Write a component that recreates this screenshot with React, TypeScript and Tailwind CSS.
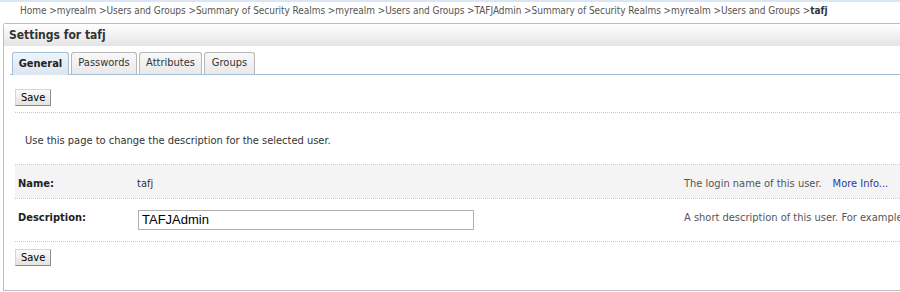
import React from "react";

const crumbs = [
  "Home",
  "myrealm",
  "Users and Groups",
  "Summary of Security Realms",
  "myrealm",
  "Users and Groups",
  "TAFJAdmin",
  "Summary of Security Realms",
  "myrealm",
  "Users and Groups",
];

function SaveButton() {
  return (
    <button className="h-[17px] px-[5px] text-[11px] leading-[15px] text-black border border-t-[#d6d6d6] border-l-[#d6d6d6] border-r-[#8c8c8c] border-b-[#8c8c8c] bg-gradient-to-b from-[#fbfbfb] to-[#e2e2de]">
      Save
    </button>
  );
}

const Dotted = () => <div className="h-0 border-t border-dotted border-[#c8c8c8]" />;

export default function App() {
  return (
    <div
      className="w-[900px] h-[292px] bg-white overflow-hidden text-[#333]"
      style={{ fontFamily: '"DejaVu Sans Condensed", "DejaVu Sans", sans-serif' }}
    >
      <div className="h-[2px] bg-[#dbe6f5]" />
      <div className="h-[21px] pl-[20px] pt-[2px] text-[10px] leading-[14px] text-[#555] whitespace-nowrap tracking-[-0.05px]">
        {crumbs.map((c, i) => (
          <span key={i}>
            {c} &gt;
          </span>
        ))}
        <span className="font-bold text-[#333]">tafj</span>
      </div>
      <div className="ml-[3px] h-[268px] border-l border-t border-b border-[#bdbdbd] rounded-tl-[3px] flex flex-col">
        <div className="h-[22px] pl-[5px] flex items-center bg-gradient-to-b from-white to-[#e4e4e4] font-bold text-[12px] text-[#333]">
          Settings for tafj
        </div>
        <div className="ml-[6px] mt-[6px] h-[23px] flex items-end gap-[2px] border-b border-[#a3bfd8] pl-[2px]">
          <div className="h-[23px] w-[57px] mb-[-1px] rounded-t-[3px] border border-b-0 border-[#a3bfd8] bg-gradient-to-b from-[#eef4fa] to-[#dae6f2] flex items-center justify-center text-[11px] font-bold text-[#222]">
            General
          </div>
          {[
            ["Passwords", "w-[66px]"],
            ["Attributes", "w-[63px]"],
            ["Groups", "w-[51px]"],
          ].map(([t, w]) => (
            <div
              key={t}
              className={`${w} h-[22px] rounded-t-[3px] border border-b-0 border-[#b7b7b7] bg-gradient-to-b from-[#f8f8f8] to-[#e9e9e9] flex items-center justify-center text-[11px] text-[#333]`}
            >
              {t}
            </div>
          ))}
        </div>
        <div className="flex pl-[11px] pt-[14px]">
          <SaveButton />
        </div>
        <div className="ml-[11px] mt-[6px]">
          <Dotted />
        </div>
        <div className="pl-[21px] pt-[5px] h-[51px] flex items-center text-[11px] text-[#333]">
          Use this page to change the description for the selected user.
        </div>
        <div className="ml-[11px]">
          <Dotted />
          <div className="h-[33px] pt-[5px] bg-[#f4f4f4] flex items-center text-[11px]">
            <div className="w-[122px] pl-[3px] font-bold text-[#222]">Name:</div>
            <div className="flex-1 text-[#333]">tafj</div>
            <div className="w-[216px] text-[#555] whitespace-nowrap">
              The login name of this user.
              <span className="ml-[11px] text-[#2c3b9c]">More Info...</span>
            </div>
          </div>
          <Dotted />
          <div className="h-[42px] flex items-center text-[11px]">
            <div className="w-[123px] pl-[3px] font-bold text-[#222] self-start pt-[11px]">Description:</div>
            <div className="flex-1">
              <div className="w-[336px] h-[20px] border border-[#b0b0b0] pl-[3px] text-[13px] leading-[18px] text-black" style={{ fontFamily: '"Liberation Sans", Arial, sans-serif' }}>
                TAFJAdmin
              </div>
            </div>
            <div className="w-[216px] text-[#555] whitespace-nowrap self-start pt-[11px]">
              A short description of this user. For example,
            </div>
          </div>
          <Dotted />
        </div>
        <div className="flex pl-[11px] pt-[7px]">
          <SaveButton />
        </div>
      </div>
    </div>
  );
}
